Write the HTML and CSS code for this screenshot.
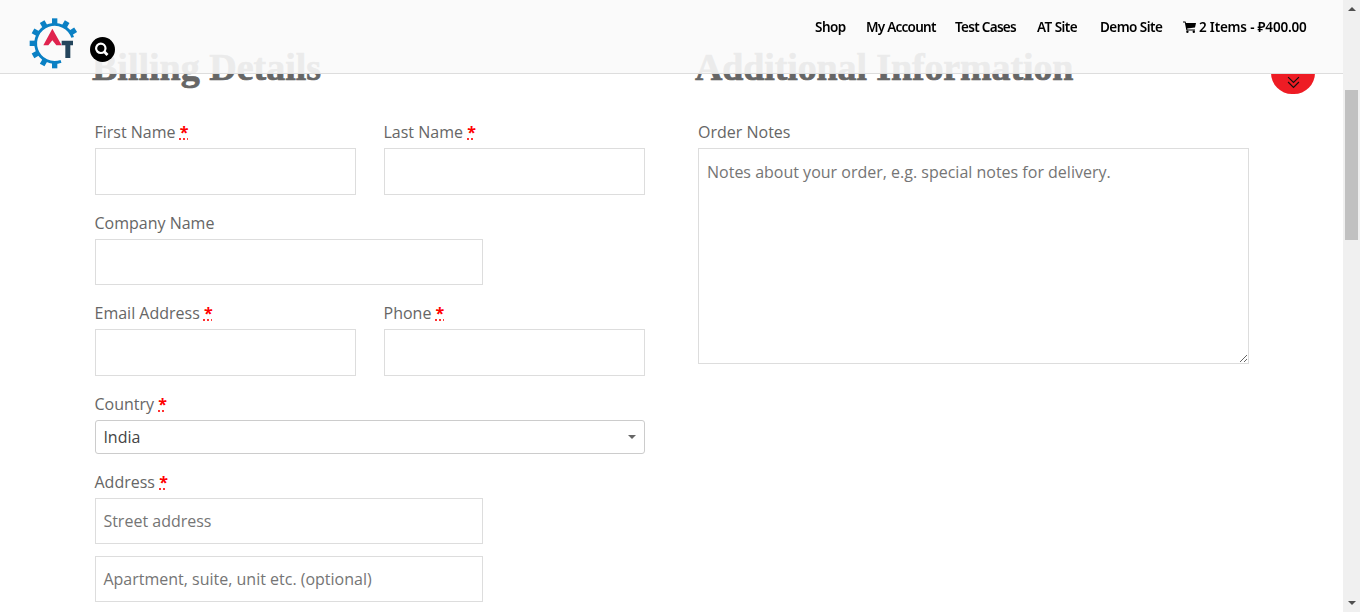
FILE: index.html
```html
<!DOCTYPE html>
<html lang="en">
<head>
<meta charset="utf-8">
<title>Checkout</title>
<link rel="stylesheet" href="styles.css">
</head>
<body>
<header class="header">
  <svg class="logo" viewBox="24 21 153 156">
    <g fill="none" stroke="#0a80c4">
      <path stroke-width="8.500" d="M126 154A57 57 0 1 1 161 82"/>
      <g stroke-width="16">
        <path d="M107 45V25"/><path d="M107 45V25" transform="rotate(30 107 100)"/>
        <path d="M107 45V25" transform="rotate(57 107 100)"/><path d="M107 45V25" transform="rotate(-30 107 100)"/>
        <path d="M107 45V25" transform="rotate(-60 107 100)"/><path d="M107 45V25" transform="rotate(-90 107 100)"/>
        <path d="M107 45V25" transform="rotate(-120 107 100)"/><path d="M107 45V25" transform="rotate(-150 107 100)"/>
        <path d="M107 45V25" transform="rotate(-180 107 100)"/>
      </g>
    </g>
    <path fill="#e0234e" d="M100 56L128 106H112L100 91L88 106H73Z"/>
    <path fill="#24455c" d="M128 92H162V106H154V144H139V106H128Z"/>
  </svg>
  <svg class="search" viewBox="0 0 25 25"><circle cx="12.500" cy="12.500" r="12.500"/><circle cx="10.800" cy="11.300" r="4.700" fill="none" stroke="#fff" stroke-width="2.200"/><path d="M14.300 14.800L17.500 18" stroke="#fff" stroke-width="2.800"/></svg>
  <nav class="nav">
    <a class="shop">Shop</a><a class="account">My Account</a><a class="cases">Test Cases</a><a class="site">AT Site</a><a class="demo">Demo Site</a>
    <a class="cart"><svg class="cart-icon" viewBox="0 0 13 12"><path d="M0 .5H2.500L3 2H13L12 6.500L4.200 7.400L4.400 8.400H12V9.500H3.400L1.800 1.600H0Z"/><circle cx="4.400" cy="10.700" r="1.200"/><circle cx="10.800" cy="10.700" r="1.200"/></svg><span class="cart-text">2 Items - ₽400.00</span></a>
  </nav>
</header>
<div class="tab"><svg class="chevrons" viewBox="0 0 12 12"><path d="M1 1L6 6L11 1M1 5.500L6 10.500L11 5.500"/></svg></div>
<main class="checkout">
  <section class="billing">
    <h3 class="title"><span class="title-billing">Billing Details</span></h3>
    <div class="row">
      <div class="field"><label class="label">First Name <abbr class="req">*</abbr></label><input class="input tall"></div>
      <div class="field"><label class="label">Last Name <abbr class="req">*</abbr></label><input class="input tall"></div>
    </div>
    <div class="field wide"><label class="label">Company Name</label><input class="input"></div>
    <div class="row">
      <div class="field"><label class="label">Email Address <abbr class="req">*</abbr></label><input class="input tall"></div>
      <div class="field"><label class="label">Phone <abbr class="req">*</abbr></label><input class="input tall"></div>
    </div>
    <div class="field"><label class="label">Country <abbr class="req">*</abbr></label><div class="select"><span>India</span><i class="arrow"></i></div></div>
    <div class="field wide"><label class="label">Address <abbr class="req">*</abbr></label><input class="input" placeholder="Street address"></div>
    <div class="field wide"><input class="input" placeholder="Apartment, suite, unit etc. (optional)"></div>
  </section>
  <section class="additional">
    <h3 class="title"><span class="title-additional">Additional Information</span></h3>
    <div class="field"><label class="label">Order Notes</label><textarea class="notes" placeholder="Notes about your order, e.g. special notes for delivery."></textarea></div>
  </section>
</main>
<aside class="scrollbar"><i class="up"></i><i class="thumb"></i><i class="down"></i></aside>
</body>
</html>
```
FILE: styles.css
```css
* { box-sizing: border-box; }
body { margin: 0; height: 612px; overflow: hidden; background: #fff; color: #666; font: 16px "Open Sans", sans-serif; }
.header { position: fixed; z-index: 2; top: 0; left: 0; width: 1343px; height: 74px; display: flex; align-items: flex-start; padding: 16px 36px 0 27px; background: rgba(250, 250, 250, .9); border-bottom: 1px solid #ddd; }
.logo { width: 51px; height: 52px; margin-top: 1px; }
.search { width: 25px; height: 25px; margin: 21px 0 0 12px; }
.nav { display: flex; gap: 21px; margin: 1px 0 0 auto; color: #000; font: 600 13.5px/20px "Noto Sans", sans-serif; white-space: nowrap; }
.nav a { display: flex; align-items: center; letter-spacing: -.55px; }
.shop { width: 30px; }
.nav .account { width: 68px; letter-spacing: -.75px; }
.nav .cases { width: 61px; letter-spacing: -.7px; }
.site { width: 42px; }
.demo { width: 62px; }
.nav .cart { width: 124px; gap: 3px; letter-spacing: -.2px; }
.cart-icon { width: 13px; height: 12px; }
.tab { position: fixed; z-index: 1; top: 73px; left: 1271px; width: 44px; height: 21px; border-radius: 0 0 22px 22px; background: #ee1c24; display: flex; justify-content: center; padding-top: 3px; }
.chevrons { width: 13px; height: 13px; fill: none; stroke: #111; stroke-width: 1.1; }
.checkout { display: flex; gap: 53px; padding: 43px 0 0 95px; }
.billing { width: 550px; }
.additional { width: 551px; }
.title { margin: 0 0 25px -3px; height: 48px; font: 700 38px/48px "Liberation Serif", serif; color: #666; white-space: nowrap; -webkit-text-stroke: .7px #666; }
.title-additional { letter-spacing: -.13px; }
.row { display: flex; gap: 28px; }
.row .field { width: 261px; }
.field { display: flex; flex-direction: column; margin-bottom: 12px; }
.wide { width: 388px; }
.label { height: 32px; line-height: 32px; margin-left: -.5px; white-space: nowrap; }
.additional .label { margin-left: 0; }
.req { color: red; font-weight: 700; text-decoration: underline dotted; }
.input, .notes { width: 100%; height: 46px; margin: 0; padding: 0 7.4px; border: 1px solid #ddd; border-radius: 0; background: #fff; font: 16px "Open Sans", sans-serif; outline: 0; }
.input.tall { height: 47px; }
.input::placeholder, .notes::placeholder { color: #757575; }
.notes { height: 216px; padding: 12px 8px; resize: vertical; }
.select { height: 34px; display: flex; align-items: center; justify-content: space-between; padding: 0 8px 0 7.4px; border: 1px solid #ccc; border-radius: 3px; color: #444; }
.arrow { border: 4px solid transparent; border-top-color: #666; border-bottom: 0; }
.scrollbar { position: fixed; top: 0; right: 0; width: 17px; height: 612px; display: flex; flex-direction: column; align-items: center; background: #f0f0f0; }
.up { margin-top: 7px; border: 4px solid transparent; border-bottom-color: #505050; border-top: 0; }
.thumb { width: 13px; height: 150px; margin-top: 79px; background: #c1c1c1; }
.down { margin: auto 0 7px; border: 4px solid transparent; border-top-color: #505050; border-bottom: 0; }
```
